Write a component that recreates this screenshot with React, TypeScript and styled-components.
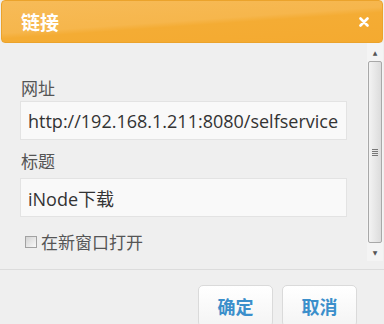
import styled, { createGlobalStyle } from 'styled-components';

const GlobalStyle = createGlobalStyle`
	html, body {
		margin: 0;
		padding: 0;
		background: #efefef;
	}
	body {
		font-family: 'Open Sans', 'Noto Sans CJK SC', sans-serif;
	}
`;

const App = () => {
	return (
		<>
			<GlobalStyle />
			<Dialog>
				<Header>
					<Title>链接</Title>
					<Close viewBox="0 0 10 10" aria-label="关闭">
						<path d="M1.5 1.5 L8.5 8.5 M8.5 1.5 L1.5 8.5" />
					</Close>
				</Header>
				<Body>
					<Content>
						<Label>网址</Label>
						<Input>http://192.168.1.211:8080/selfservice</Input>
						<Label $spaced>标题</Label>
						<Input>iNode下载</Input>
						<CheckRow>
							<Checkbox />
							<span>在新窗口打开</span>
						</CheckRow>
					</Content>
					<Scrollbar>
						<Arrow>▲</Arrow>
						<Thumb>
							<Grip />
						</Thumb>
						<Arrow>▼</Arrow>
					</Scrollbar>
				</Body>
				<Footer>
					<Button>确定</Button>
					<Button>取消</Button>
				</Footer>
			</Dialog>
		</>
	);
};

const Dialog = styled.div`
	width: 384px;
	height: 324px;
	display: flex;
	flex-direction: column;
	background: #efefef;
	overflow: hidden;
`;

const Header = styled.div`
	height: 41px;
	margin: 0 1px;
	flex-shrink: 0;
	display: flex;
	align-items: center;
	justify-content: space-between;
	padding: 0 13px 0 19px;
	border: 1px solid #eba32c;
	border-radius: 4px;
	background: linear-gradient(176deg, #f7bb58 0%, #f6b64c 48%, #f4ac34 56%, #f4aa30 100%);
`;

const Title = styled.div`
	color: #fff;
	font-size: 19px;
	font-weight: bold;
	font-family: 'Noto Sans CJK SC', sans-serif;
`;

const Close = styled.svg`
	width: 10px;
	height: 10px;
	fill: none;
	stroke: #fff;
	stroke-width: 2.6;
	stroke-linecap: round;
`;

const Body = styled.div`
	display: flex;
	height: 218px;
	flex-shrink: 0;
`;

const Content = styled.div`
	flex: 1;
	padding: 34px 20px 0 20px;
	display: flex;
	flex-direction: column;
	align-items: stretch;
`;

const Label = styled.div<{ $spaced?: boolean }>`
	font-size: 17px;
	line-height: 22px;
	color: #555;
	padding-left: 1px;
	margin-top: ${(p) => (p.$spaced ? '10px' : '0')};
	margin-bottom: ${(p) => (p.$spaced ? '6px' : '2px')};
	font-family: 'Noto Sans CJK SC', sans-serif;
`;

const Input = styled.div`
	height: 37px;
	border: 1px solid #e3e3e3;
	background: #f9f9f9;
	padding: 0 7px;
	display: flex;
	align-items: center;
	font-size: 18px;
	color: #333;
	white-space: nowrap;
	overflow: hidden;
`;

const CheckRow = styled.div`
	display: flex;
	align-items: center;
	margin-top: 14px;
	padding-left: 5px;
	font-size: 17px;
	line-height: 22px;
	color: #555;
	font-family: 'Noto Sans CJK SC', sans-serif;
	gap: 4px;
`;

const Checkbox = styled.span`
	width: 10px;
	height: 10px;
	flex-shrink: 0;
	border: 1px solid #a2a2a2;
	background: linear-gradient(135deg, #d4d4d4, #f8f8f8);
`;

const Scrollbar = styled.div`
	width: 16px;
	margin: 0 1px 0 0;
	display: flex;
	flex-direction: column;
	background: #f4f4f4;
`;

const Arrow = styled.div`
	height: 18px;
	display: flex;
	align-items: center;
	justify-content: center;
	font-size: 6px;
	color: #555;
	font-family: 'DejaVu Sans', sans-serif;
`;

const Thumb = styled.div`
	flex: 1;
	margin: 0 1px;
	border: 1px solid #a8a8a8;
	border-radius: 2px;
	background: linear-gradient(90deg, #f3f3f3, #dcdcdc);
	display: flex;
	align-items: center;
	justify-content: center;
`;

const Grip = styled.div`
	width: 6px;
	height: 7px;
	background: repeating-linear-gradient(180deg, #777 0 1px, transparent 1px 2px);
`;

const Footer = styled.div`
	flex: 1;
	margin-top: 8px;
	border-top: 1px solid #dcdcdc;
	display: flex;
	justify-content: flex-end;
	align-items: flex-start;
	gap: 9px;
	padding: 15px 27px 0 0;
`;

const Button = styled.div`
	width: 73px;
	height: 40px;
	border: 1px solid #dadada;
	border-radius: 5px;
	background: linear-gradient(180deg, #ffffff, #f4f4f4);
	display: flex;
	align-items: center;
	justify-content: center;
	color: #3b8fcb;
	font-size: 18px;
	font-weight: bold;
	font-family: 'Noto Sans CJK SC', sans-serif;
`;

export default App;
